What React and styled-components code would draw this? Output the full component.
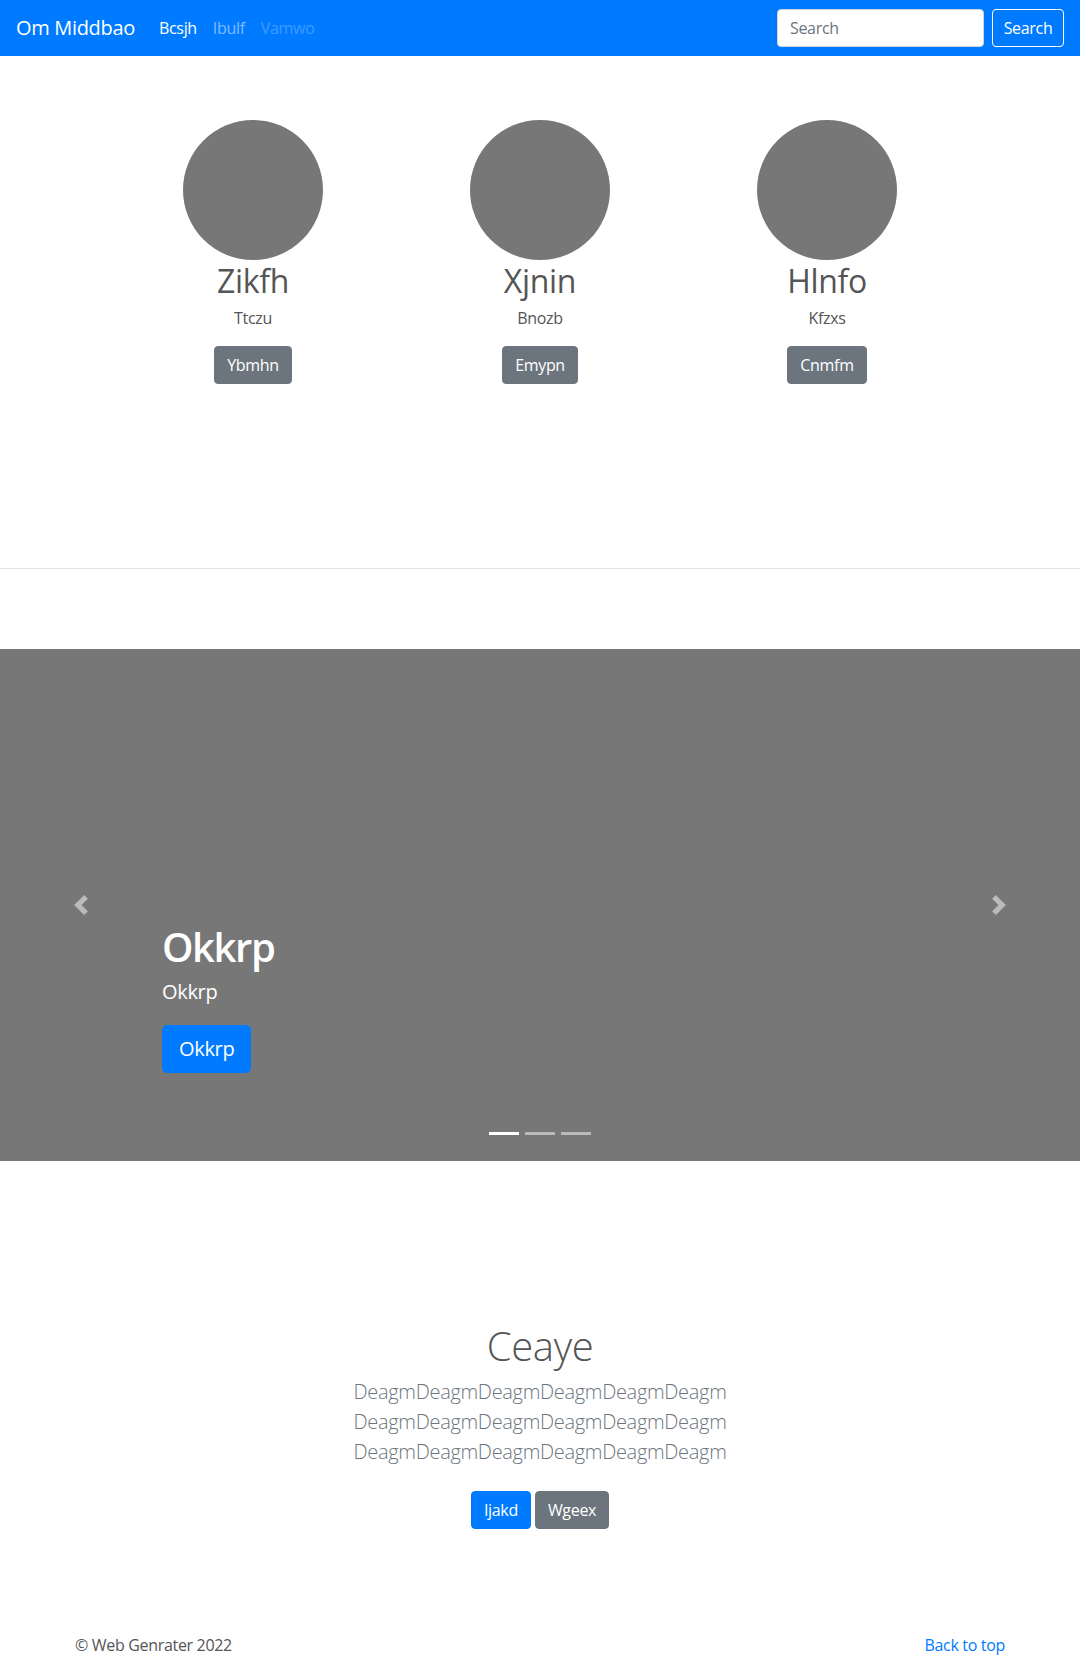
import styled, { createGlobalStyle } from 'styled-components'

const GlobalStyle = createGlobalStyle`
    * { box-sizing: border-box; }
    body {
        margin: 0;
        font-family: "Open Sans", "Noto Sans", sans-serif;
        font-size: 16px;
        line-height: 1.5;
        letter-spacing: -0.02em;
        color: #555;
        background: #fff;
    }
`

const people = [
    { name: 'Zikfh', role: 'Ttczu', action: 'Ybmhn' },
    { name: 'Xjnin', role: 'Bnozb', action: 'Emypn' },
    { name: 'Hlnfo', role: 'Kfzxs', action: 'Cnmfm' },
]

export default function App(){
    return (
        <>
            <GlobalStyle />
            <Navbar>
                <Brand>Om Middbao</Brand>
                <NavList>
                    <NavLink state="active">Bcsjh</NavLink>
                    <NavLink>Ibulf</NavLink>
                    <NavLink state="disabled">Vamwo</NavLink>
                </NavList>
                <SearchForm>
                    <SearchInput placeholder="Search" />
                    <OutlineButton>Search</OutlineButton>
                </SearchForm>
            </Navbar>

            <Marketing>
                {people.map(p => (
                    <Person key={p.name}>
                        <Avatar />
                        <PersonName>{p.name}</PersonName>
                        <PersonRole>{p.role}</PersonRole>
                        <Button variant="secondary">{p.action}</Button>
                    </Person>
                ))}
            </Marketing>

            <Divider />

            <Carousel>
                <Control side="left">
                    <Chevron viewBox="0 0 8 8"><path d="M5.25 0l-4 4 4 4 1.5-1.5L4.25 4l2.5-2.5L5.25 0z" /></Chevron>
                </Control>
                <Caption>
                    <CaptionTitle>Okkrp</CaptionTitle>
                    <CaptionText>Okkrp</CaptionText>
                    <Button variant="primary" size="lg">Okkrp</Button>
                </Caption>
                <Control side="right">
                    <Chevron viewBox="0 0 8 8"><path d="M2.75 0l-1.5 1.5L3.75 4l-2.5 2.5L2.75 8l4-4-4-4z" /></Chevron>
                </Control>
                <Indicators>
                    <Indicator active />
                    <Indicator />
                    <Indicator />
                </Indicators>
            </Carousel>

            <Jumbo>
                <JumboTitle>Ceaye</JumboTitle>
                <Lead>{'DeagmDeagmDeagmDeagmDeagmDeagm\nDeagmDeagmDeagmDeagmDeagmDeagm\nDeagmDeagmDeagmDeagmDeagmDeagm'}</Lead>
                <ButtonRow>
                    <Button variant="primary">Ijakd</Button>
                    <Button variant="secondary">Wgeex</Button>
                </ButtonRow>
            </Jumbo>

            <Footer>
                <span>© Web Genrater 2022</span>
                <TopLink href="#">Back to top</TopLink>
            </Footer>
        </>
    )
}

const Navbar = styled.nav`
    height: 56px;
    background: #007bff;
    display: flex;
    align-items: center;
    padding: 0 16px;
`

const Brand = styled.a`
    font-size: 20px;
    color: #fff;
    margin-right: 16px;
    white-space: nowrap;
`

const NavList = styled.div`
    display: flex;
    flex: 1;
`

const NavLink = styled.a`
    padding: 0 8px;
    color: ${p => p.state === 'active' ? '#fff' : p.state === 'disabled' ? 'rgba(255,255,255,.25)' : 'rgba(255,255,255,.5)'};
`

const SearchForm = styled.form`
    display: flex;
    gap: 8px;
`

const SearchInput = styled.input`
    width: 207px;
    height: 38px;
    padding: 6px 12px;
    font: inherit;
    letter-spacing: inherit;
    color: #495057;
    border: 1px solid #ced4da;
    border-radius: 4px;
    &::placeholder { color: #6c757d; }
`

const OutlineButton = styled.button`
    width: 72px;
    height: 38px;
    padding: 0;
    font: inherit;
    letter-spacing: inherit;
    color: #fff;
    background: transparent;
    border: 1px solid #fff;
    border-radius: 4px;
`

const Marketing = styled.section`
    display: flex;
    justify-content: center;
    padding: 64px 0 0;
    height: 512px;
`

const Person = styled.div`
    width: 287px;
    display: flex;
    flex-direction: column;
    align-items: center;
`

const Avatar = styled.div`
    width: 140px;
    height: 140px;
    border-radius: 50%;
    background: #777;
`

const PersonName = styled.h2`
    margin: 2px 0 0;
    font-size: 32px;
    font-weight: 400;
    line-height: 1.2;
`

const PersonRole = styled.p`
    margin: 6px 0 16px;
    font-size: 16px;
`

const Button = styled.button`
    font: inherit;
    letter-spacing: inherit;
    font-size: ${p => p.size === 'lg' ? '20px' : '16px'};
    line-height: 1.5;
    padding: ${p => p.size === 'lg' ? '8px 16px' : '6px 12px'};
    border-radius: ${p => p.size === 'lg' ? '5px' : '4px'};
    color: #fff;
    border: 1px solid ${p => p.variant === 'primary' ? '#007bff' : '#6c757d'};
    background: ${p => p.variant === 'primary' ? '#007bff' : '#6c757d'};
`

const Divider = styled.hr`
    margin: 0 0 80px;
    border: 0;
    border-top: 1px solid rgba(0,0,0,.1);
`

const Carousel = styled.div`
    position: relative;
    height: 512px;
    background: #777;
`

const Control = styled.div`
    position: absolute;
    top: 0;
    bottom: 0;
    ${p => p.side}: 0;
    width: 15%;
    display: flex;
    align-items: center;
    justify-content: center;
`

const Chevron = styled.svg`
    width: 20px;
    height: 20px;
    fill: rgba(255,255,255,.5);
`

const Caption = styled.div`
    position: absolute;
    left: 15%;
    right: 15%;
    bottom: 88px;
    color: #fff;
`

const CaptionTitle = styled.h1`
    margin: 0 0 6px;
    font-size: 40px;
    font-weight: 600;
    line-height: 1.2;
    letter-spacing: -0.035em;
`

const CaptionText = styled.p`
    margin: 0 0 18px;
    font-size: 20px;
`

const Indicators = styled.div`
    position: absolute;
    left: 0;
    right: 0;
    bottom: 26px;
    display: flex;
    justify-content: center;
    gap: 6px;
`

const Indicator = styled.span`
    width: 30px;
    height: 3px;
    background: ${p => p.active ? '#fff' : 'rgba(255,255,255,.5)'};
`

const Jumbo = styled.section`
    padding: 161px 0 0;
    text-align: center;
`

const JumboTitle = styled.h1`
    margin: 0;
    font-size: 40px;
    font-weight: 300;
    line-height: 1.2;
`

const Lead = styled.p`
    margin: 7px 0 24px;
    font-size: 20px;
    font-weight: 300;
    line-height: 30px;
    color: #6c757d;
    white-space: pre-line;
`

const ButtonRow = styled.div`
    display: flex;
    justify-content: center;
    gap: 4px;
`

const Footer = styled.footer`
    width: 930px;
    margin: 0 auto;
    display: flex;
    justify-content: space-between;
    padding-top: 104px;
`

const TopLink = styled.a`
    color: #007bff;
    text-decoration: none;
`
